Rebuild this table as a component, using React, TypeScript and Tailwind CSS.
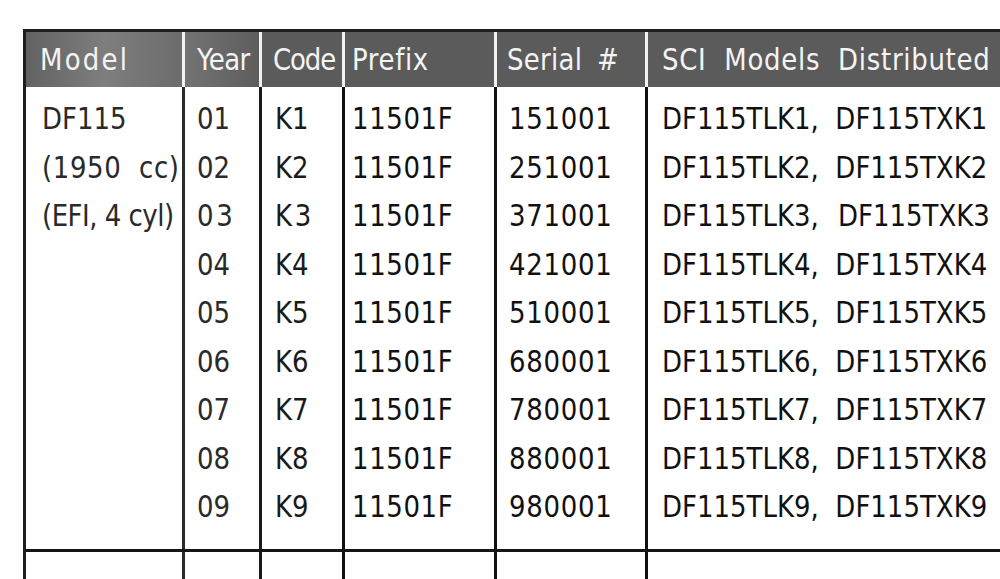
import React from "react";

type Row = { year: string; code: string; serial: string; sci: string };

const rows: Row[] = [
  { year: "01", code: "K1", serial: "151001", sci: "DF115TLK1,  DF115TXK1" },
  { year: "02", code: "K2", serial: "251001", sci: "DF115TLK2,  DF115TXK2" },
  { year: "0\u200a3", code: "K\u200a3", serial: "371001", sci: "DF115TLK3,  \u200aDF115TXK3" },
  { year: "04", code: "K4", serial: "421001", sci: "DF115TLK4,  DF115TXK4" },
  { year: "05", code: "K5", serial: "510001", sci: "DF115TLK5,  DF115TXK5" },
  { year: "06", code: "K6", serial: "680001", sci: "DF115TLK6,  DF115TXK6" },
  { year: "07", code: "K7", serial: "780001", sci: "DF115TLK7,  DF115TXK7" },
  { year: "08", code: "K8", serial: "880001", sci: "DF115TLK8,  DF115TXK8" },
  { year: "09", code: "K9", serial: "980001", sci: "DF115TLK9,  DF115TXK9" },
];

// text in the source is drawn a little taller than it is wide
const HeadText = ({ children, className = "" }: { children: React.ReactNode; className?: string }) => (
  <div className={`origin-top scale-y-[1.16] whitespace-pre text-[26px] leading-[40px] text-[#f4f4f4] ${className}`}>
    {children}
  </div>
);

const BodyLines = ({ lines, className = "" }: { lines: React.ReactNode[]; className?: string }) => (
  <div className="pt-[8px]">
    <div className={`origin-top scale-y-[1.14] whitespace-pre text-[26px] leading-[42.55px] ${className}`}>
      {lines.map((line, i) => (
        <div key={i}>{line}</div>
      ))}
    </div>
  </div>
);

const modelLines = [
  "DF115",
  <span className="tracking-[0.6px]">{"(1950  cc)"}</span>,
  <span className="tracking-[-0.5px]">{"(EFI, 4 cyl)"}</span>,
];

const cols = "grid grid-cols-[156px_77px_83px_152px_151px_1fr]";

export default function App() {
  return (
    <div className="h-[579px] w-[1000px] overflow-hidden bg-white pl-[23px] pt-[29px] font-['DejaVu_Sans',sans-serif]">
      <div className="w-[1040px] border-l-[3px] border-t-[3px] border-[#1e1e1e]">
        {/* header */}
        <div className={`${cols} h-[55px] bg-[#5b5b5b]`}>
          <div className="bg-gradient-to-r from-[#626262] via-[#7e7e7e] to-[#6c6c6c] pl-[14px] pt-[4px]">
            <HeadText className="tracking-[2.2px]">Model</HeadText>
          </div>
          <div className="border-l-[3px] border-[#f2f2f2] bg-gradient-to-r from-[#737373] to-[#5d5d5d] pl-[12px] pt-[4px]">
            <HeadText className="tracking-[-0.6px]">Year</HeadText>
          </div>
          <div className="border-l-[3px] border-[#f2f2f2] pl-[11px] pt-[4px]">
            <HeadText className="tracking-[-1.1px]">Code</HeadText>
          </div>
          <div className="border-l-[3px] border-[#f2f2f2] pl-[7px] pt-[4px]">
            <HeadText className="tracking-[0.6px]">Prefix</HeadText>
          </div>
          <div className="border-l-[3px] border-[#f2f2f2] pl-[10px] pt-[4px]">
            <HeadText className="tracking-[0.3px] [word-spacing:6px]">{"Serial #"}</HeadText>
          </div>
          <div className="border-l-[3px] border-[#f2f2f2] pl-[14px] pt-[4px]">
            <HeadText className="tracking-[0.7px]">{"SCI  Models  Distributed"}</HeadText>
          </div>
        </div>

        {/* body */}
        <div className={`${cols} h-[462px]`}>
          <div className="pl-[16px]">
            <BodyLines lines={modelLines} className="text-[#2a2a2a]" />
          </div>
          <div className="border-l-[3px] border-[#2a2a2a] pl-[12px]">
            <BodyLines lines={rows.map((r) => r.year)} className="text-[#2a2a2a]" />
          </div>
          <div className="border-l-[3px] border-[#1a1a1a] pl-[13px]">
            <BodyLines lines={rows.map((r) => r.code)} className="text-[#1a1a1a]" />
          </div>
          <div className="border-l-[3px] border-[#111] pl-[7px]">
            <BodyLines lines={rows.map(() => "11501F")} className="tracking-[0.6px] text-[#111]" />
          </div>
          <div className="border-l-[3px] border-[#111] pl-[12px]">
            <BodyLines lines={rows.map((r) => r.serial)} className="tracking-[0.7px] text-[#111]" />
          </div>
          <div className="border-l-[3px] border-[#111] pl-[14px]">
            <BodyLines lines={rows.map((r) => r.sci)} className="text-[#111]" />
          </div>
        </div>

        {/* next (empty) row, cut off by the page edge */}
        <div className={`${cols} h-[40px] border-t-[3px] border-[#161616]`}>
          <div />
          <div className="border-l-[3px] border-[#2a2a2a]" />
          <div className="border-l-[3px] border-[#1a1a1a]" />
          <div className="border-l-[3px] border-[#111]" />
          <div className="border-l-[3px] border-[#111]" />
          <div className="border-l-[3px] border-[#111]" />
        </div>
      </div>
    </div>
  );
}
